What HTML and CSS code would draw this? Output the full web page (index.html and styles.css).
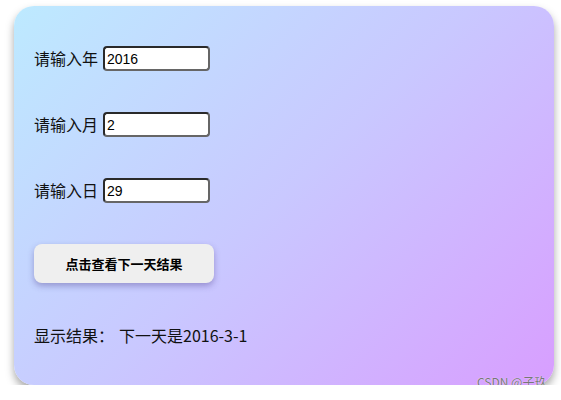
FILE: index.html
```html
<!DOCTYPE html>
<html lang="zh">
<head>
<meta charset="utf-8">
<link rel="stylesheet" href="styles.css">
</head>
<body>
<div class="page">
  <div class="card">
    <div class="row"><label>请输入年</label><input class="field" type="text" value="2016"></div>
    <div class="row"><label>请输入月</label><input class="field" type="text" value="2"></div>
    <div class="row"><label>请输入日</label><input class="field" type="text" value="29"></div>
    <div class="row"><button class="btn">点击查看下一天结果</button></div>
    <div class="result">显示结果：<span class="gap"></span>下一天是2016-3-1</div>
  </div>
  <div class="watermark">CSDN @子玖</div>
</div>
</body>
</html>
```
FILE: styles.css
```css
html, body {
  margin: 0;
  padding: 0;
  background: #ffffff;
}
.page {
  position: relative;
  padding: 6px 7px 0 14px;
  font-family: "Noto Sans CJK SC", "Noto Sans", sans-serif;
}
.card {
  width: 540px;
  height: 379px;
  box-sizing: border-box;
  border-radius: 20px;
  background: linear-gradient(135deg, #bdeaff 0%, #c9c8ff 50%, #d89eff 100%);
  box-shadow: 0 5px 8px rgba(0, 0, 0, 0.35);
  padding: 40px 20px 0 20px;
  display: flex;
  flex-direction: column;
  gap: 41px;
}
.row {
  display: flex;
  align-items: center;
  height: 25px;
}
.row label {
  font-size: 16px;
  color: #111;
  margin-right: 5px;
  line-height: 25px;
}
.field {
  width: 107px;
  height: 25px;
  box-sizing: border-box;
  border: 2px solid #2a2a2a;
  border-right-color: #666;
  border-bottom-color: #666;
  border-radius: 4px;
  background: #fff;
  padding: 0 2px;
  font-family: "Liberation Sans", Arial, sans-serif;
  font-size: 14px;
  color: #000;
  outline: none;
}
.row:has(.btn) {
  height: 39px;
}
.btn {
  width: 180px;
  height: 39px;
  border: none;
  border-radius: 8px;
  background: #efefef;
  box-shadow: 0 3px 6px rgba(60, 40, 120, 0.35);
  font-family: "Noto Sans CJK SC", sans-serif;
  font-weight: bold;
  font-size: 13px;
  color: #000;
}
.result {
  font-size: 16px;
  line-height: 22px;
  color: #111;
  display: flex;
  align-items: center;
}
.gap {
  display: inline-block;
  width: 5px;
}
.watermark {
  position: absolute;
  left: 477px;
  top: 374px;
  font-family: "Noto Sans CJK SC", sans-serif;
  font-size: 12px;
  line-height: 16px;
  color: #777;
  text-shadow: 0 0 1px #fff;
}
```
